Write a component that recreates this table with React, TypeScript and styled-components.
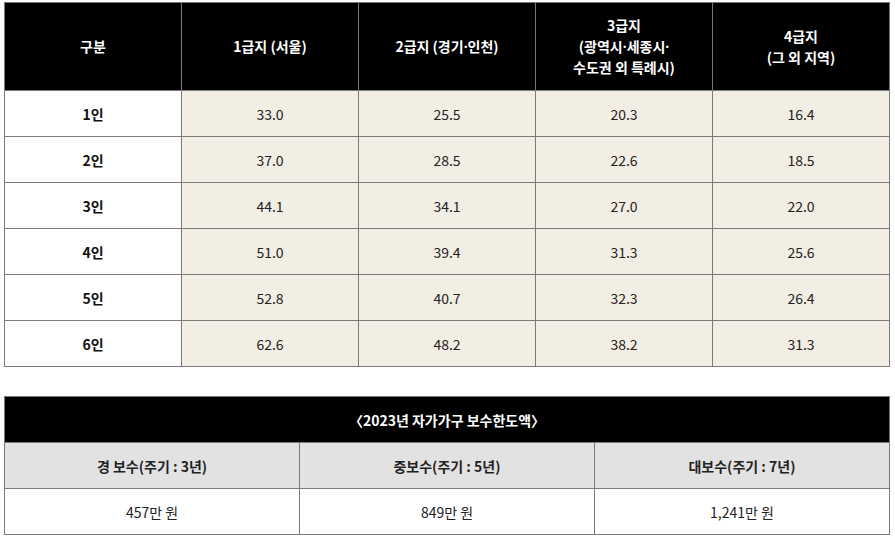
import React from "react";
import styled, { createGlobalStyle } from "styled-components";

const Global = createGlobalStyle`
  html, body { margin: 0; padding: 0; background: #fff; }
  body { font-family: "Noto Sans CJK KR", "Noto Sans", sans-serif; }
`;

const Page = styled.div`
  padding: 2px 6px 0 4px;
  display: flex;
  flex-direction: column;
  gap: 29px;
`;

const Table = styled.table`
  width: 886px;
  border-collapse: collapse;
  table-layout: fixed;
  font-size: 14px;
  color: #222;
`;

const HeadCell = styled.th`
  background: #000;
  color: #fff;
  font-weight: 700;
  border: 1px solid #7a7a7a;
  height: 87px;
  line-height: 21px;
  text-align: center;
  vertical-align: middle;
  padding: 0 4px;
`;

const TitleCell = styled.th`
  background: #000;
  color: #fff;
  font-weight: 700;
  border: 1px solid #7a7a7a;
  height: 45px;
  text-align: center;
  padding: 0;
`;

const SubHeadCell = styled.th`
  background: #e2e2e2;
  color: #222;
  font-weight: 700;
  border: 1px solid #7a7a7a;
  height: 45px;
  text-align: center;
  padding: 0;
`;

const Cell = styled.td<{ $label?: boolean; $tint?: boolean }>`
  background: ${(p) => (p.$tint ? "#f2eee4" : "#fff")};
  font-weight: ${(p) => (p.$label ? 700 : 400)};
  color: ${(p) => (p.$label ? "#111" : "#222")};
  border: 1px solid #7a7a7a;
  height: 45px;
  text-align: center;
  padding: 0;
`;

const Dot = styled.span`
  font-family: "Noto Sans", sans-serif;
`;

const rows: [string, string[]][] = [
  ["1인", ["33.0", "25.5", "20.3", "16.4"]],
  ["2인", ["37.0", "28.5", "22.6", "18.5"]],
  ["3인", ["44.1", "34.1", "27.0", "22.0"]],
  ["4인", ["51.0", "39.4", "31.3", "25.6"]],
  ["5인", ["52.8", "40.7", "32.3", "26.4"]],
  ["6인", ["62.6", "48.2", "38.2", "31.3"]],
];

export default function App() {
  return (
    <>
      <Global />
      <Page>
        <Table>
          <thead>
            <tr>
              <HeadCell>구분</HeadCell>
              <HeadCell>1급지 (서울)</HeadCell>
              <HeadCell>
                2급지 (경기<Dot>·</Dot>인천)
              </HeadCell>
              <HeadCell>
                3급지
                <br />
                (광역시<Dot>·</Dot>세종시<Dot>·</Dot>
                <br />
                수도권 외 특례시)
              </HeadCell>
              <HeadCell>
                4급지
                <br />
                (그 외 지역)
              </HeadCell>
            </tr>
          </thead>
          <tbody>
            {rows.map(([label, vals]) => (
              <tr key={label}>
                <Cell $label>{label}</Cell>
                {vals.map((v, i) => (
                  <Cell key={i} $tint>
                    {v}
                  </Cell>
                ))}
              </tr>
            ))}
          </tbody>
        </Table>
        <Table>
          <thead>
            <tr>
              <TitleCell colSpan={3}>〈2023년 자가가구 보수한도액〉</TitleCell>
            </tr>
            <tr>
              <SubHeadCell>경 보수(주기 : 3년)</SubHeadCell>
              <SubHeadCell>중보수(주기 : 5년)</SubHeadCell>
              <SubHeadCell>대보수(주기 : 7년)</SubHeadCell>
            </tr>
          </thead>
          <tbody>
            <tr>
              <Cell>457만 원</Cell>
              <Cell>849만 원</Cell>
              <Cell>1,241만 원</Cell>
            </tr>
          </tbody>
        </Table>
      </Page>
    </>
  );
}
